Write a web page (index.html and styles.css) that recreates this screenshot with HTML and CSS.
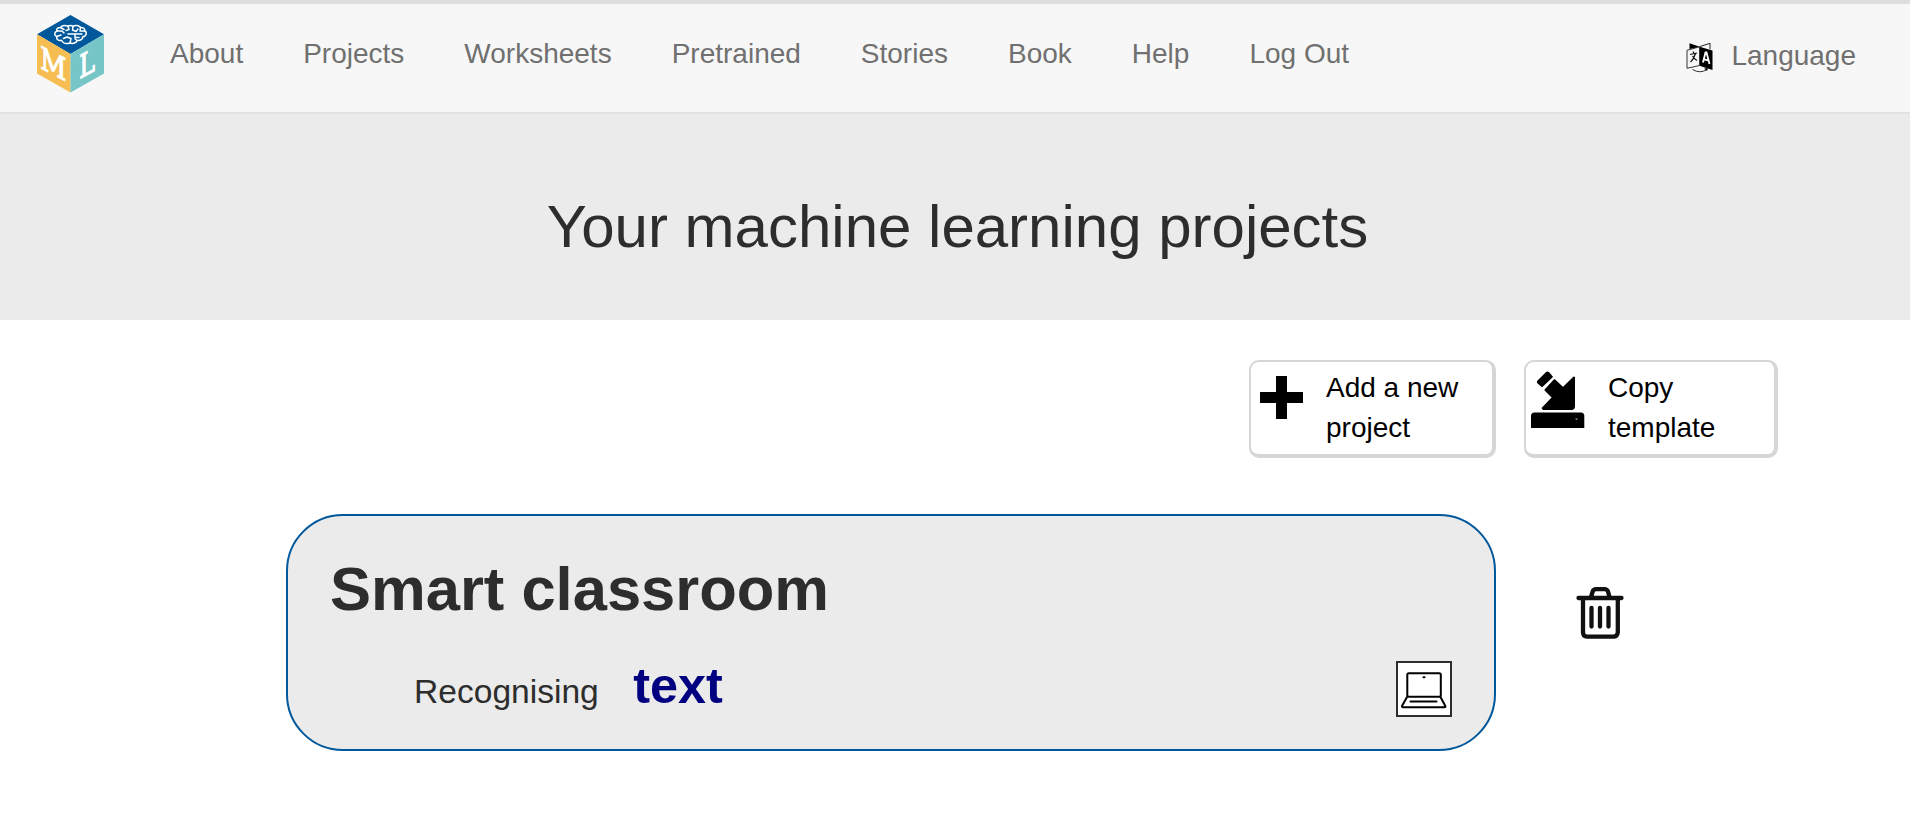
FILE: index.html
```html
<!DOCTYPE html>
<html lang="en">
<head>
<meta charset="utf-8">
<title>Your machine learning projects</title>
<link rel="stylesheet" href="styles.css">
</head>
<body>
<nav class="navbar">
  <a class="brand">
    <svg class="logo" width="68" height="78" viewBox="0 0 68 78">
      <path fill="#00589c" d="M33.5 0 67 19.3 33.5 39 0 19.3Z"/>
      <path fill="#f5bd52" d="M0 19.3 33.5 39V77.5L0 58.5Z"/>
      <path fill="#76c5c7" d="M67 19.3 33.5 39V77.5L67 58.5Z"/>
      <g fill="none" stroke="#fff" stroke-width="1.5" stroke-linecap="round" stroke-linejoin="round">
        <path d="M31 11.2C27 9.6 24 11 23.5 12.5 20.5 12.4 19 14.3 20 16 17 17.2 17 20.5 19.8 21.5 19 24.5 22 26 24.5 25.2 26 28.5 30 29 33 28 36 29 39.500 28 40 25.500 43.500 26 46 24 45.500 22 49.500 21 50.500 17.500 47.800 16 48.200 13.500 45.500 12.200 43.500 12.500 42 10.300 38 10 36 11.300 34.500 10.300 32.500 10.300 31 11.200Z"/>
        <path d="M23.500 12.500 27 14.500M20 16H25L27 18M19.800 21.500 24 20M31 11.200 32 14.500 29 15.500M36 11.300 35.500 15 39 16.500 41 14M43.500 12.500 43 16 47.800 16M31 19H45M38 19V22.500H42M33 28 34 23.500 30 22 26.500 23.500M40 25.500 38 24"/>
      </g>
      <text class="cube-letter" font-size="31" transform="matrix(.82 .42 0 1 3.200 53)">M</text>
      <text class="cube-letter" font-size="32" transform="matrix(.74 -.4 0 1 42.300 64)">L</text>
    </svg>
  </a>
  <div class="nav-links">
    <a>About</a><a>Projects</a><a>Worksheets</a><a>Pretrained</a><a>Stories</a><a>Book</a><a>Help</a><a>Log Out</a>
  </div>
  <a class="language">
    <svg width="28" height="32" viewBox="0 0 28 32">
      <path fill="#000" d="M3.500 1.200 14.500 5 26.500 8.500V28L13.500 23.800V5.500L3.500 7Z"/>
      <path d="M14 4.500 24 1.300V7" fill="none" stroke="#222"/>
      <path d="M1 8.300 13.500 4.800V23.500L1 26.300Z" fill="#f7f7f7" stroke="#333"/>
      <path d="M4 12.500 11 11M7 9.500 8 11.500M9.500 11.500Q8 17 4.500 20M6.500 14Q8.500 17.500 11 18.500" fill="none" stroke="#111" stroke-width="1.200"/>
      <path d="M17 20.500 19.500 10.500H20.500L23.500 22M18 17.300 22.200 18.300" fill="none" stroke="#fff" stroke-width="1.800"/>
      <path d="M6.500 27.500Q14 32 21 27.500" fill="none" stroke="#333"/>
      <path d="M18 26.500 22 26 21 29Z"/>
    </svg>
    <span>Language</span>
  </a>
</nav>
<header class="hero"><h1>Your machine learning projects</h1></header>
<main>
  <div class="actions">
    <button class="action add">
      <svg width="43" height="43" viewBox="0 0 43 43"><path d="M16 0H27V16H43V27H27V43H16V27H0V16H16Z"/></svg>
      <span>Add a new project</span>
    </button>
    <button class="action copy">
      <svg width="54" height="58" viewBox="0 0 54 58">
        <path stroke="#000" stroke-width="2" stroke-linejoin="round" d="M7 10.500 15.500 2Q16.500 1.200 17.500 2L20.800 5.800 11 15 7 11.500ZM23.500 9.200 32 17.200 43 6.500V35Q43 38 40.500 38H12.500L11.700 37.200 22 26.500 14.500 19Z"/>
        <path d="M0 57V45Q0 41.500 3.500 41.500H50Q53.300 41.500 53.300 45V57Z"/>
        <path d="M44 47.500H47L45.500 49.200Z" fill="#999"/>
      </svg>
      <span>Copy template</span>
    </button>
  </div>
  <div class="project-row">
    <section class="project">
      <h2>Smart classroom</h2>
      <div class="project-info">
        <p>Recognising <strong>text</strong></p>
        <div class="storage">
          <svg width="52" height="52" viewBox="0 0 52 52" fill="none" stroke="#000" stroke-width="2" stroke-linejoin="round" stroke-linecap="round">
            <rect x="9.300" y="10.300" width="33.500" height="23.500" rx="1.500"/>
            <path d="M9 34 4 43Q3.800 44.200 5 44.200H46.500Q47.800 44.200 47.300 43L42.500 34M12.500 38.500H38.500M25.500 14.300H26.500"/>
          </svg>
        </div>
      </div>
    </section>
    <a class="delete">
      <svg width="50" height="54" viewBox="0 0 50 54" fill="none" stroke="#111" stroke-width="4.300" stroke-linecap="round" stroke-linejoin="round">
        <path d="M3.500 12H46.500M8 13V46.500Q8.200 50.700 12 50.700H38.500Q42.300 50.700 42.800 46.500V13M16 11 17.700 5.500Q18.500 3.200 21 3.200H29.500Q32 3.200 33 5.500L34.500 11M16.500 22V40.500M25 22V40.500M33.500 22V40.500"/>
      </svg>
    </a>
  </div>
</main>
</body>
</html>
```

FILE: styles.css
```css
* { box-sizing: border-box; }
body {
  margin: 0;
  background: #fff;
  color: #2d2d2d;
  font-family: "Liberation Sans", Arial, sans-serif;
  font-size: 28px;
  line-height: 40px;
}
svg { display: block; flex: none; }
.navbar {
  display: flex;
  height: 114px;
  padding: 11px 54px 0 37px;
  border-top: 4px solid #dedede;
  border-bottom: 2px solid #e1e1e1;
  background: #f7f7f7;
  color: #707070;
}
.cube-letter {
  font-family: "DejaVu Serif", serif;
  fill: #fff;
  stroke: #fff;
  stroke-width: 1.2px;
}
.nav-links { display: flex; gap: 60px; margin: 19px 0 0 65px; }
.nav-links a { white-space: nowrap; }
.language { display: flex; gap: 17px; margin: 21px 0 0 auto; }
.language svg { margin-top: 6px; }
.hero {
  height: 206px;
  padding-top: 79px;
  background: #ebebeb;
  text-align: center;
}
h1 { margin: 0; padding-left: 5px; font-size: 60px; font-weight: 400; line-height: 68px; }
.actions {
  display: flex;
  justify-content: flex-end;
  gap: 28px;
  padding: 40px 132px 0 0;
}
.action {
  display: flex;
  align-items: flex-start;
  height: 98px;
  padding: 0;
  border: solid #d6d6d6;
  border-width: 2px 4px 4px 2px;
  border-radius: 10px;
  background: #fff;
  color: #000;
  font: inherit;
  text-align: left;
}
.action span { margin-top: 6px; }
.add { width: 247px; }
.add svg { margin: 14px 23px 0 9px; }
.add span { width: 140px; }
.copy { width: 254px; }
.copy svg { margin: 9px 23px 0 5px; }
.copy span { width: 120px; }
.project-row { display: flex; padding: 56px 0 0 286px; }
.project {
  width: 1210px;
  height: 237px;
  padding: 38px 42px 0;
  border: 2px solid #00589c;
  border-radius: 57px;
  background: #ebebeb;
}
h2 { margin: 0; font-size: 61.5px; line-height: 70px; }
.project-info { display: flex; justify-content: space-between; align-items: flex-start; }
.project-info p { margin: 32px 0 0 84px; font-size: 33.6px; line-height: 60px; }
.project-info strong { margin-left: 25px; color: #000080; font-size: 50.4px; }
.storage { margin-top: 37px; border: 2px solid #2d2d2d; background: #fff; }
.delete { margin: 72px 0 0 79px; }
```
